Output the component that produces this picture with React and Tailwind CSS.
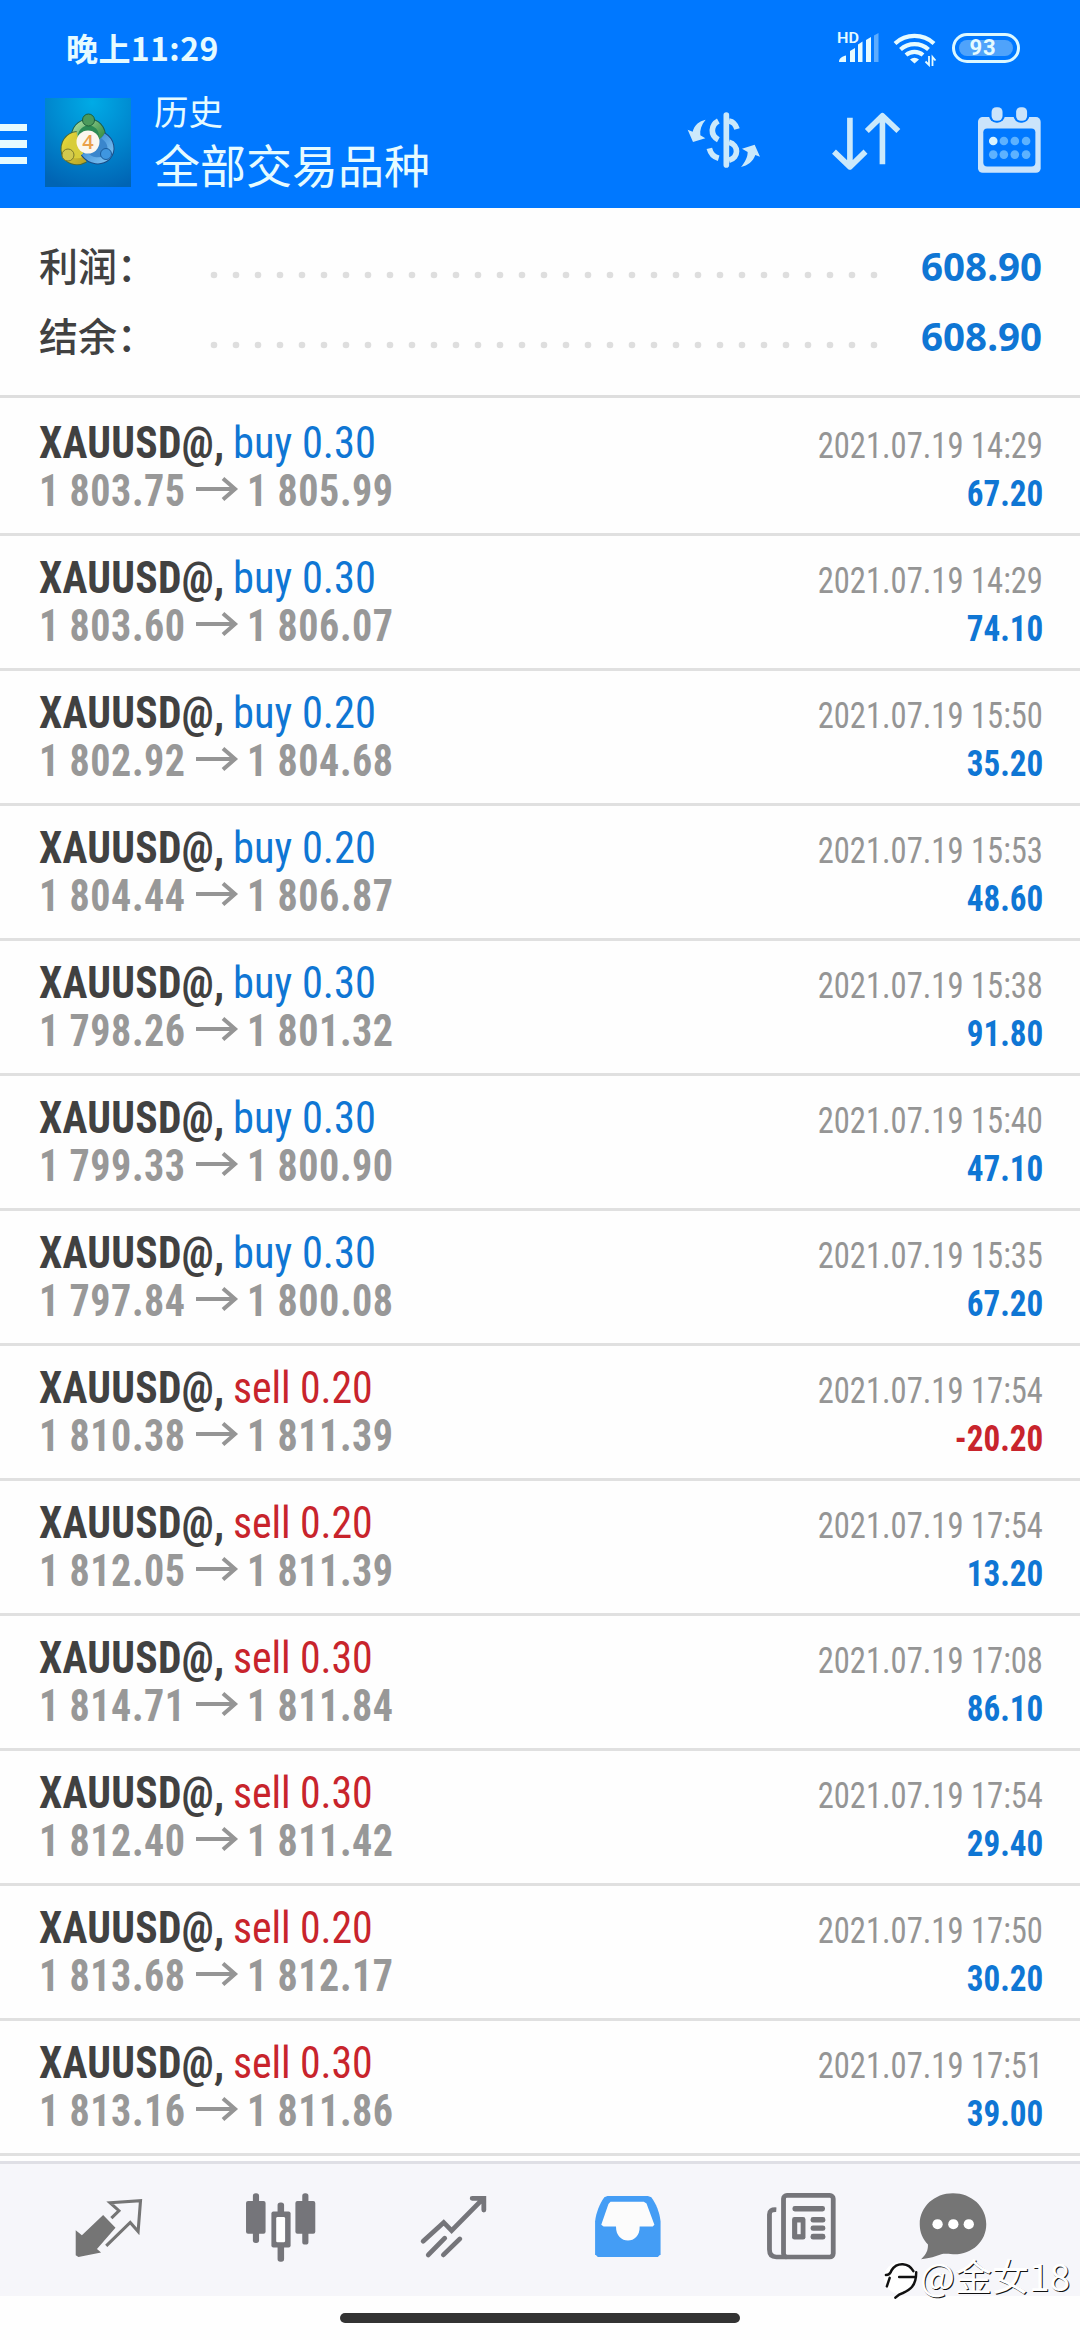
const TRADES = [
  ['buy', '0.30', '1 803.75', '1 805.99', '2021.07.19 14:29', '67.20'],
  ['buy', '0.30', '1 803.60', '1 806.07', '2021.07.19 14:29', '74.10'],
  ['buy', '0.20', '1 802.92', '1 804.68', '2021.07.19 15:50', '35.20'],
  ['buy', '0.20', '1 804.44', '1 806.87', '2021.07.19 15:53', '48.60'],
  ['buy', '0.30', '1 798.26', '1 801.32', '2021.07.19 15:38', '91.80'],
  ['buy', '0.30', '1 799.33', '1 800.90', '2021.07.19 15:40', '47.10'],
  ['buy', '0.30', '1 797.84', '1 800.08', '2021.07.19 15:35', '67.20'],
  ['sell', '0.20', '1 810.38', '1 811.39', '2021.07.19 17:54', '-20.20'],
  ['sell', '0.20', '1 812.05', '1 811.39', '2021.07.19 17:54', '13.20'],
  ['sell', '0.30', '1 814.71', '1 811.84', '2021.07.19 17:08', '86.10'],
  ['sell', '0.30', '1 812.40', '1 811.42', '2021.07.19 17:54', '29.40'],
  ['sell', '0.20', '1 813.68', '1 812.17', '2021.07.19 17:50', '30.20'],
  ['sell', '0.30', '1 813.16', '1 811.86', '2021.07.19 17:51', '39.00'],
];

function SignalIcon() {
  return (
    <svg viewBox="-2 -4 46 38" className="-mt-[4px] h-[38px] w-[46px] overflow-visible" fill="#e6fbff">
      <text x="0" y="12" fontSize="15" fontWeight="600" fontFamily="Roboto, sans-serif" textLength="22" lengthAdjust="spacingAndGlyphs">HD</text>
      <path d="M2 31c0-4 4-6 7-6.500v6.500zM13 20l5-3v14h-5zM21 13.500l4.500-3v20.500H21zM29 9l5-3v25h-5z" />
      <path d="M37 4.500l4.500-2.500v29H37z" opacity=".4" />
    </svg>
  );
}

function WifiIcon() {
  return (
    <svg viewBox="0 0 44 36" className="h-[36px] w-[44px]" fill="none" stroke="#e6fbff" strokeWidth="4.200">
      <path d="M2 12.500a29 29 0 0 1 39 0M7.500 18.500a21 21 0 0 1 28 0M13 24a13 13 0 0 1 17 0" />
      <path d="M17 28.500a7 7 0 0 1 9 0l-4.500 4z" fill="#e6fbff" stroke="none" />
      <path d="M36 25v9l-3.500-3.500M39.500 35v-9l3 3.500" strokeWidth="1.800" />
    </svg>
  );
}

function Logo() {
  return (
    <svg viewBox="0 0 86 89" className="h-[89px] w-[86px]">
      <defs>
        <radialGradient id="bg" cx=".55" cy=".05" r="1">
          <stop offset="0" stopColor="#00abe6" />
          <stop offset=".55" stopColor="#0085cd" />
          <stop offset="1" stopColor="#0064b4" />
        </radialGradient>
        <linearGradient id="gr" x2="1" y2="1"><stop stopColor="#a5dba0" /><stop offset="1" stopColor="#1c7a2c" /></linearGradient>
        <linearGradient id="ye" x2="1" y2="1"><stop stopColor="#e6da3c" /><stop offset="1" stopColor="#b9a62a" /></linearGradient>
        <linearGradient id="bl" x2="1" y2="1"><stop stopColor="#2d7fd0" /><stop offset="1" stopColor="#7fc4f2" /></linearGradient>
      </defs>
      <rect width="86" height="89" fill="url(#bg)" />
      <path d="M30 42c-3-22 29-24 27-1 0 4-2 7-4 10" fill="none" stroke="#1d5f4a" strokeWidth="8" />
      <path d="M30 42c-3-22 29-24 27-1 0 4-2 7-4 10" fill="#2c8a55" stroke="url(#gr)" strokeWidth="6" />
      <path d="M32 37c-9 1-14 9-12 18 2 7 11 11 20 6" fill="none" stroke="#4a6a3a" strokeWidth="8" />
      <path d="M32 37c-9 1-14 9-12 18 2 7 11 11 20 6" fill="#d8cd3a" stroke="url(#ye)" strokeWidth="6" />
      <path d="M58 38c8 5 10 14 4 21-6 5-16 5-23-4" fill="none" stroke="#1b4c86" strokeWidth="8" />
      <path d="M58 38c8 5 10 14 4 21-6 5-16 5-23-4" fill="#3a86cc" stroke="url(#bl)" strokeWidth="6" />
      <circle cx="43.500" cy="22" r="6" fill="#4c9a5c" stroke="#1d5f3a" />
      <circle cx="23" cy="57" r="6" fill="#d2c94e" stroke="#7a7a2c" />
      <circle cx="61" cy="56" r="5.500" fill="#3f96e0" stroke="#1b5c9c" />
      <circle cx="43" cy="44" r="11.500" fill="#fbf6ee" />
      <text x="43" y="51" textAnchor="middle" fontSize="20" fontWeight="600" fontFamily="Open Sans, sans-serif" fill="#eaa04a">4</text>
    </svg>
  );
}

function DollarIcon() {
  return (
    <svg viewBox="136 334 222 174" className="h-[58px] w-[74px]" fill="none" stroke="#cbe9fb" strokeWidth="17" strokeLinecap="butt">
      <path d="M254 346v150" strokeLinecap="round" />
      <path d="M230 364c-22 12-26 42 0 56M203 446c4 16 14 26 28 30" />
      <path d="M262 364c12 2 20 10 24 24M262 428c30 8 30 46 0 54" />
      <path d="M192 360c-20 4-34 16-39 36l-15-6 16 37 37-11-15-9c-2-16 3-32 16-47zM298 502c20-4 36-16 43-36l14 5-16-36-38 12 17 10c0 16-8 30-20 45z" fill="#cbe9fb" stroke="none" />
    </svg>
  );
}

function SortIcon() {
  return (
    <svg viewBox="572 334 208 180" className="h-[60px] w-[69px]" fill="none" stroke="#cbe9fb" strokeWidth="17" strokeLinejoin="round">
      <path d="M626 354v146M578 456l48 46 47-46M724 494V348M677 394l47-46 48 46" />
    </svg>
  );
}

function CalendarIcon() {
  const dots = [1057, 1089, 1122, 1156];
  return (
    <svg viewBox="1008 320 196 204" className="h-[68px] w-[65px]">
      <rect x="1011" y="353" width="189" height="168" rx="14" fill="#cbe4fb" />
      <rect x="1027" y="387" width="157" height="115" rx="12" fill="#0078ff" />
      <rect x="1044" y="310" width="48" height="60" rx="22" fill="#0078ff" />
      <rect x="1118" y="310" width="48" height="60" rx="22" fill="#0078ff" />
      <rect x="1052" y="323" width="33" height="41" rx="14" fill="#cbe4fb" />
      <rect x="1126" y="323" width="33" height="41" rx="14" fill="#cbe4fb" />
      {dots.map((x) => (
        <g key={x} fill="#5db2ff">
          <circle cx={x} cy="425" r="13" fill={x === 1057 ? '#d9f4ff' : '#5db2ff'} />
          <circle cx={x} cy="466" r="13" />
        </g>
      ))}
    </svg>
  );
}

function NavIcon({ x, children }) {
  return (
    <svg viewBox={`${x} 155 210 215`} preserveAspectRatio="none" className="h-[72px] w-[72px]">
      {children}
    </svg>
  );
}

function Leader() {
  return (
    <svg viewBox="0 0 670 10" className="h-[10px] w-[670px]" fill="#dedede">
      {Array.from({ length: 31 }, (_, i) => (
        <circle key={i} cx={5 + i * 22} cy="5" r="3.300" />
      ))}
    </svg>
  );
}

function SummaryRow({ label, value }) {
  return (
    <div className="flex h-[70px] items-center pr-[38px] pl-[39px]">
      <span className="-mt-[4px] w-[170px] font-['Noto_Sans_CJK_SC',sans-serif] text-[39px] leading-[66px] font-medium text-[#414141]">{label}</span>
      <span className="mt-[17px]"><Leader /></span>
      <span className="ml-auto font-['Noto_Sans',sans-serif] text-[38.500px] leading-[70px] font-bold text-[#0f76d4]">{value}</span>
    </div>
  );
}

function TradeRow({ trade }) {
  const [side, lots, open, close, time, profit] = trade;
  return (
    <div className="h-[135px] border-b-[3px] border-[#e0e0e0] pt-[18px] pr-[37px] pl-[39px] whitespace-nowrap">
      <div className="flex h-[48px] items-baseline text-[44px] leading-[48px]">
        <span className="w-[194px] origin-left scale-x-[0.945] font-bold tracking-[0.3px] text-[#414141]">XAUUSD@,</span>
        <span className={side === 'buy' ? 'origin-left scale-x-[0.965] text-[#0f76d4]' : 'origin-left scale-x-[0.95] tracking-[-0.1px] text-[#c8242c]'}>{side} {lots}</span>
        <span className="ml-auto origin-right scale-x-[0.905] text-[36px] text-[#959595]">{time}</span>
      </div>
      <div className="flex h-[48px] items-baseline text-[44px] leading-[48px]">
        <span className="w-[155px] origin-left scale-x-[0.91] font-bold tracking-[0.6px] text-[#989898]">{open}</span>
        <svg viewBox="0 0 46 36" className="h-[36px] w-[46px]" fill="none" stroke="#959595" strokeWidth="4">
          <path d="M2 19h40M29 8.500l12 10.500-12 10.500" />
        </svg>
        <span className="ml-[7px] origin-left scale-x-[0.91] font-bold tracking-[0.6px] text-[#989898]">{close}</span>
        <span className={profit.startsWith('-') ? 'ml-auto origin-right scale-x-[0.92] text-[36px] font-bold text-[#c8242c]' : 'ml-auto origin-right scale-x-[0.92] text-[36px] font-bold text-[#0f76d4]'}>{profit}</span>
      </div>
    </div>
  );
}

export default function App() {
  return (
    <div className="relative flex h-[2340px] w-[1080px] flex-col overflow-hidden bg-[#fefefe] font-['Roboto_Condensed',Roboto,sans-serif]">
      <header className="h-[208px] bg-[#0078ff]">
        <div className="flex h-[95px] items-center pr-[60px] pl-[66px]">
          <span className="-mt-[2px] font-['Noto_Sans_CJK_SC',sans-serif] text-[32px] leading-[48px] font-bold tracking-[0.4px] text-[#e6fbff]">晚上11:29</span>
          <div className="ml-auto flex items-center">
            <SignalIcon />
            <span className="mt-[2px] ml-[12px]"><WifiIcon /></span>
            <div className="ml-[15px] flex h-[30px] w-[68px] rounded-full border-[3px] border-[#dcf8ff] p-[4px]">
              <div className="flex w-full items-center justify-center rounded-full bg-[#4fa3fb] pr-[6px] font-['Roboto'] text-[22px] leading-none font-bold tracking-[1px] text-[#e6fbff]">93</div>
            </div>
          </div>
        </div>
        <div className="flex h-[113px] items-start">
          <div className="mt-[29px] flex w-[27px] flex-col gap-[9px]">
            <i className="h-[7px] bg-[#e6fbff]" />
            <i className="h-[8px] bg-[#e6fbff]" />
            <i className="h-[7px] bg-[#e6fbff]" />
          </div>
          <div className="mt-[3px] ml-[18px]"><Logo /></div>
          <div className="-mt-[9px] ml-[23px] font-['Noto_Sans_CJK_SC',sans-serif] text-[#e6fbff]">
            <div className="text-[34.500px] leading-[48px]">历史</div>
            <div className="text-[46px] leading-[58px]">全部交易品种</div>
          </div>
          <div className="mt-[16px] ml-auto"><DollarIcon /></div>
          <div className="mt-[16px] ml-[71px]"><SortIcon /></div>
          <div className="mt-[11px] mr-[38px] ml-[76px]"><CalendarIcon /></div>
        </div>
      </header>

      <section className="h-[190px] border-b-[3px] border-[#dedede] pt-[23px]">
        <SummaryRow label="利润：" value="608.90" />
        <SummaryRow label="结余：" value="608.90" />
      </section>

      <main className="h-[1763px] pt-[3px]">
        {TRADES.map((t, i) => <TradeRow key={i} trade={t} />)}
      </main>

      <nav className="grid h-[135px] grid-cols-[171px_173px_174px_173px_152px_72px] border-t-[3px] border-[#dfdfe5] bg-[#f6f6fa] pt-[27px] pl-[74px]">
        <NavIcon x={214}>
          <path d="M219 272l18 15 62-60 36 38-54 63 12 11-66 13-8-5z" fill="#757575" />
          <path d="M323 236l22-22-26-24 89-6-7 92-23-27-70 70" fill="none" stroke="#757575" strokeWidth="9" />
        </NavIcon>
        <NavIcon x={712}>
          <g fill="#75757a">
            <rect x="735" y="162" width="18" height="148" rx="8" />
            <rect x="715" y="185" width="57" height="98" rx="6" />
            <rect x="879" y="162" width="18" height="153" rx="8" />
            <rect x="859" y="185" width="58" height="98" rx="6" />
            <rect x="807" y="189" width="19" height="177" rx="8" />
            <rect x="789" y="216" width="56" height="108" rx="6" />
          </g>
          <rect x="803" y="233" width="26" height="75" rx="4" fill="#fff" />
        </NavIcon>
        <NavIcon x={1215}>
          <path d="M1230 305l60-56 23 24 92-95M1245 346l48-50M1289 346l48-48M1373 177h34v35" fill="none" stroke="#75757a" strokeWidth="14" strokeLinecap="round" />
        </NavIcon>
        <NavIcon x={150}>
          <path d="M195 170h118l10 4c14 20 24 44 27 72v98l-8 8H167l-8-8v-98c3-26 13-52 27-72z" fill="#449df5" />
          <path d="M204 187h97l8 5 23 64-5 5h-38c2 56-70 56-69 0h-36l-7-5 21-62z" fill="#fcfcfc" />
        </NavIcon>
        <NavIcon x={652}>
          <g fill="none" stroke="#75757a" strokeWidth="14">
            <rect x="706" y="168" width="145" height="184" rx="10" />
            <path d="M685 211c-14-1-20 4-20 14v105c0 14 6 22 20 22h30" />
          </g>
          <g fill="#75757a">
            <rect x="732" y="200" width="95" height="16" rx="7" />
            <rect x="731" y="233" width="39" height="67" rx="7" />
            <rect x="785" y="233" width="43" height="16" rx="7" />
            <rect x="785" y="258" width="43" height="16" rx="7" />
            <rect x="785" y="283" width="43" height="17" rx="7" />
          </g>
          <rect x="746" y="249" width="10" height="35" fill="#f6f6fa" />
        </NavIcon>
        <NavIcon x={1094}>
          <path d="M1199 162c54 0 97 40 97 92s-43 92-97 90c-18-1-24-3-34 0-18 6-32 12-59 15 16-16 20-26 20-44-15-17-24-36-24-61 0-52 43-92 97-92z" fill="#757575" />
          <g fill="#fff">
            <circle cx="1154" cy="254" r="15" />
            <circle cx="1200" cy="254" r="15" />
            <circle cx="1245" cy="254" r="15" />
          </g>
        </NavIcon>
      </nav>
      <div className="mx-auto mt-[17px] h-[10px] w-[400px] rounded-full bg-[#333]" />

      <div className="absolute top-[2251px] left-[884px] flex items-center">
        <svg viewBox="0 0 38 48" className="h-[48px] w-[36px]" fill="none" strokeLinecap="round">
          <circle cx="17" cy="27" r="17" fill="#fff" />
          <path d="M2 24c4 0 5-2 6-5 6-9 18-8 23 1M3 36l3-9M16 26h17M34 21c0 15-7 19-14 22-4 1-6 3-8 5" stroke="#111" strokeWidth="2.600" />
        </svg>
        <span className="font-['Noto_Sans_CJK_SC',sans-serif] text-[37px] leading-[48px] whitespace-nowrap text-white [text-shadow:1px_1px_0_#111]">@金女18</span>
      </div>
    </div>
  );
}
